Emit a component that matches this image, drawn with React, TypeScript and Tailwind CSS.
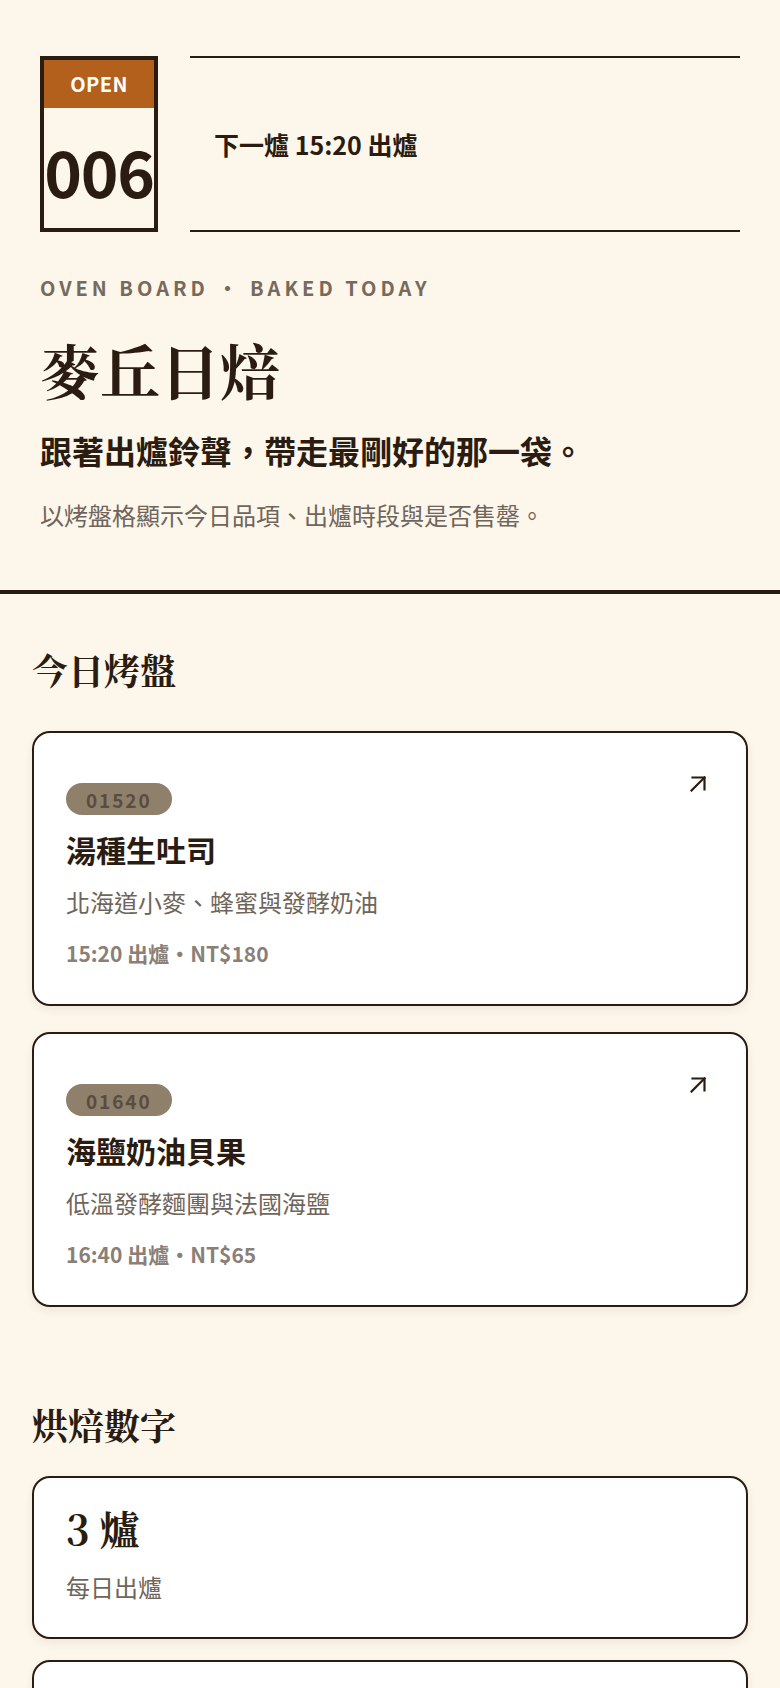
const sans = "font-['Noto_Sans_CJK_TC','Noto_Sans',sans-serif]";
const serif = "font-['Noto_Serif_CJK_TC','Noto_Serif_TC','Noto_Serif_CJK_SC','Liberation_Serif',serif]";

type Tray = {
  code: string;
  name: string;
  desc: string;
  meta: string;
};

const trays: Tray[] = [
  {
    code: "01520",
    name: "湯種生吐司",
    desc: "北海道小麥、蜂蜜與發酵奶油",
    meta: "15:20 出爐・NT$180",
  },
  {
    code: "01640",
    name: "海鹽奶油貝果",
    desc: "低溫發酵麵團與法國海鹽",
    meta: "16:40 出爐・NT$65",
  },
];

const stats = [
  { value: "3 爐", label: "每日出爐" },
  { value: "12 款", label: "今日品項" },
];

function ArrowIcon() {
  return (
    <svg
      viewBox="0 0 16 16"
      className="w-4 h-4"
      fill="none"
      stroke="currentColor"
      strokeWidth={2.2}
      strokeLinecap="square"
    >
      <path d="M1.5 14.5 14.5 1.5" />
      <path d="M2.5 1.5h12v12" />
    </svg>
  );
}

function TrayCard({ tray }: { tray: Tray }) {
  return (
    <div className="relative bg-white border-2 border-[#2a1c10] rounded-[18px] shadow-[0_4px_10px_rgba(60,40,20,0.07)] px-8 pt-[50px] pb-[40px]">
      <div className="absolute top-[43px] right-[40px] text-[#2a1c10]">
        <ArrowIcon />
      </div>
      <span className="inline-flex items-center h-8 px-5 rounded-full bg-[#8f806b] text-[#5a4d3e] text-[19px] font-bold tracking-[0.1em] leading-none">
        {tray.code}
      </span>
      <h3 className="mt-[19px] text-[30px] font-bold leading-none text-[#2a1c10]">
        {tray.name}
      </h3>
      <p className="mt-[26px] text-[24px] leading-none text-[#6f655a]">
        {tray.desc}
      </p>
      <p className="mt-[29px] text-[21px] font-bold leading-none text-[#8a8077]">
        {tray.meta}
      </p>
    </div>
  );
}

export default function App() {
  return (
    <div className={`min-h-screen bg-[#fdf6eb] text-[#2a1c10] ${sans}`}>
      {/* Header */}
      <header className="px-10 pt-14 pb-[63px] border-b-4 border-[#2a1c10]">
        <div className="flex gap-8">
          <div className="w-[118px] h-[176px] border-4 border-[#2a1c10] flex flex-col shrink-0">
            <div className="h-[48px] bg-[#b4601d] flex items-center justify-center text-white text-[20px] font-bold tracking-[0.02em]">
              OPEN
            </div>
            <div className="flex-1 flex items-center justify-center pt-1 text-[64px] font-bold leading-none tracking-[-0.02em]">
              006
            </div>
          </div>
          <div className="flex-1 h-[176px] border-y-2 border-[#2a1c10] flex items-center px-6">
            <span className="text-[25px] font-bold leading-none">下一爐 15:20 出爐</span>
          </div>
        </div>

        <p className="mt-[46px] text-[20px] font-bold leading-none tracking-[0.2em] text-[#766a5c]">
          OVEN BOARD • BAKED TODAY
        </p>
        <h1 className={`mt-[41px] text-[60px] font-bold leading-none ${serif}`}>
          麥丘日焙
        </h1>
        <p className="mt-[35px] text-[32px] font-bold leading-none">
          跟著出爐鈴聲，帶走最剛好的那一袋。
        </p>
        <p className="mt-[37px] text-[24px] leading-none text-[#6f655a]">
          以烤盤格顯示今日品項、出爐時段與是否售罄。
        </p>
      </header>

      {/* Today's trays */}
      <section className="px-8 pt-[58px]">
        <h2 className={`text-[36px] font-bold leading-none ${serif}`}>今日烤盤</h2>
        <div className="mt-[43px] flex flex-col gap-[26px]">
          {trays.map((t) => (
            <TrayCard key={t.code} tray={t} />
          ))}
        </div>
      </section>

      {/* Numbers */}
      <section className="px-8 pt-[100px] pb-16">
        <h2 className={`text-[36px] font-bold leading-none ${serif}`}>烘焙數字</h2>
        <div className="mt-[33px] flex flex-col gap-[21px]">
          {stats.map((s) => (
            <div
              key={s.label}
              className="bg-white border-2 border-[#2a1c10] rounded-[18px] shadow-[0_4px_10px_rgba(60,40,20,0.07)] px-8 pt-[30px] pb-[38px]"
            >
              <div className={`text-[40px] font-bold leading-none ${serif}`}>{s.value}</div>
              <div className="mt-[27px] text-[24px] leading-none text-[#6f655a]">{s.label}</div>
            </div>
          ))}
        </div>
      </section>
    </div>
  );
}
